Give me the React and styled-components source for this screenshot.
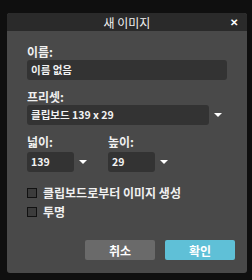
import React from "react";
import styled, { createGlobalStyle } from "styled-components";

const Global = createGlobalStyle`
  body {
    margin: 0;
    background: #0f0f0f;
    font-family: "Noto Sans CJK KR", "Noto Sans", sans-serif;
  }
`;

const Page = styled.div`
  width: 252px;
  height: 280px;
  padding: 13px 0 0 7px;
  box-sizing: border-box;
`;

const Dialog = styled.div`
  width: 240px;
  height: 260px;
  background: #494949;
  border-radius: 3px;
  overflow: hidden;
  display: flex;
  flex-direction: column;
`;

const Header = styled.div`
  height: 18px;
  background: #2a2a2a;
  display: flex;
  align-items: center;
  justify-content: center;
  position: relative;
  color: #f2f2f2;
  font-size: 12px;
`;

const Close = styled.span`
  position: absolute;
  right: 9px;
  top: 1px;
  font-size: 10px;
  font-weight: bold;
  color: #fff;
`;

const Body = styled.div`
  padding: 14px 20px 0 20px;
  display: flex;
  flex-direction: column;
`;

const Label = styled.div`
  color: #f0f0f0;
  font-size: 12px;
  font-weight: bold;
  line-height: 14px;
  margin-top: ${p => p.$top || 0}px;
  margin-bottom: ${p => p.$bottom || 1}px;
`;

const Field = styled.div`
  width: ${p => p.$width}px;
  height: 20px;
  background: #333;
  border-radius: 3px;
  color: #f2f2f2;
  font-size: 10.5px;
  font-weight: bold;
  line-height: 20px;
  padding-left: 4px;
  box-sizing: border-box;
`;

const SelectRow = styled.div`
  display: flex;
  align-items: center;
`;

const Arrow = styled.span`
  width: 0;
  height: 0;
  margin-left: 5px;
  border-left: 4px solid transparent;
  border-right: 4px solid transparent;
  border-top: 4px solid #fff;
`;

const Pair = styled.div`
  display: flex;
  gap: 21px;
`;

const Col = styled.div`
  display: flex;
  flex-direction: column;
`;

const Check = styled.label`
  display: flex;
  align-items: center;
  gap: 6px;
  height: 13px;
  margin-top: ${p => p.$top}px;
  color: #f0f0f0;
  font-size: 12px;
  font-weight: bold;
`;

const Box = styled.span`
  width: 8px;
  height: 8px;
  border: 1px solid #111;
  background: #3c3c3c;
`;

const Buttons = styled.div`
  display: flex;
  justify-content: flex-end;
  gap: 10px;
  margin-top: 22px;
  padding-right: 12px;
  margin-right: -20px;
`;

const Button = styled.button`
  width: 70px;
  height: 20px;
  border: none;
  border-radius: 2px;
  background: ${p => (p.$primary ? "#5fc0d7" : "#6a6a6a")};
  color: #fff;
  font-family: inherit;
  font-size: 12px;
  font-weight: bold;
  padding: 0;
`;

export default function App() {
  return (
    <Page>
      <Global />
      <Dialog>
        <Header>
          새 이미지
          <Close>✕</Close>
        </Header>
        <Body>
          <Label>이름:</Label>
          <Field $width={200}>이름 없음</Field>
          <Label $top={10}>프리셋:</Label>
          <SelectRow>
            <Field $width={182}>클립보드 139 x 29</Field>
            <Arrow />
          </SelectRow>
          <Pair>
            <Col>
              <Label $top={10} $bottom={3}>넓이:</Label>
              <SelectRow>
                <Field $width={47}>139</Field>
                <Arrow />
              </SelectRow>
            </Col>
            <Col>
              <Label $top={10} $bottom={3}>높이:</Label>
              <SelectRow>
                <Field $width={47}>29</Field>
                <Arrow />
              </SelectRow>
            </Col>
          </Pair>
          <Check $top={14}>
            <Box />
            클립보드로부터 이미지 생성
          </Check>
          <Check $top={6}>
            <Box />
            투명
          </Check>
          <Buttons>
            <Button>취소</Button>
            <Button $primary>확인</Button>
          </Buttons>
        </Body>
      </Dialog>
    </Page>
  );
}
